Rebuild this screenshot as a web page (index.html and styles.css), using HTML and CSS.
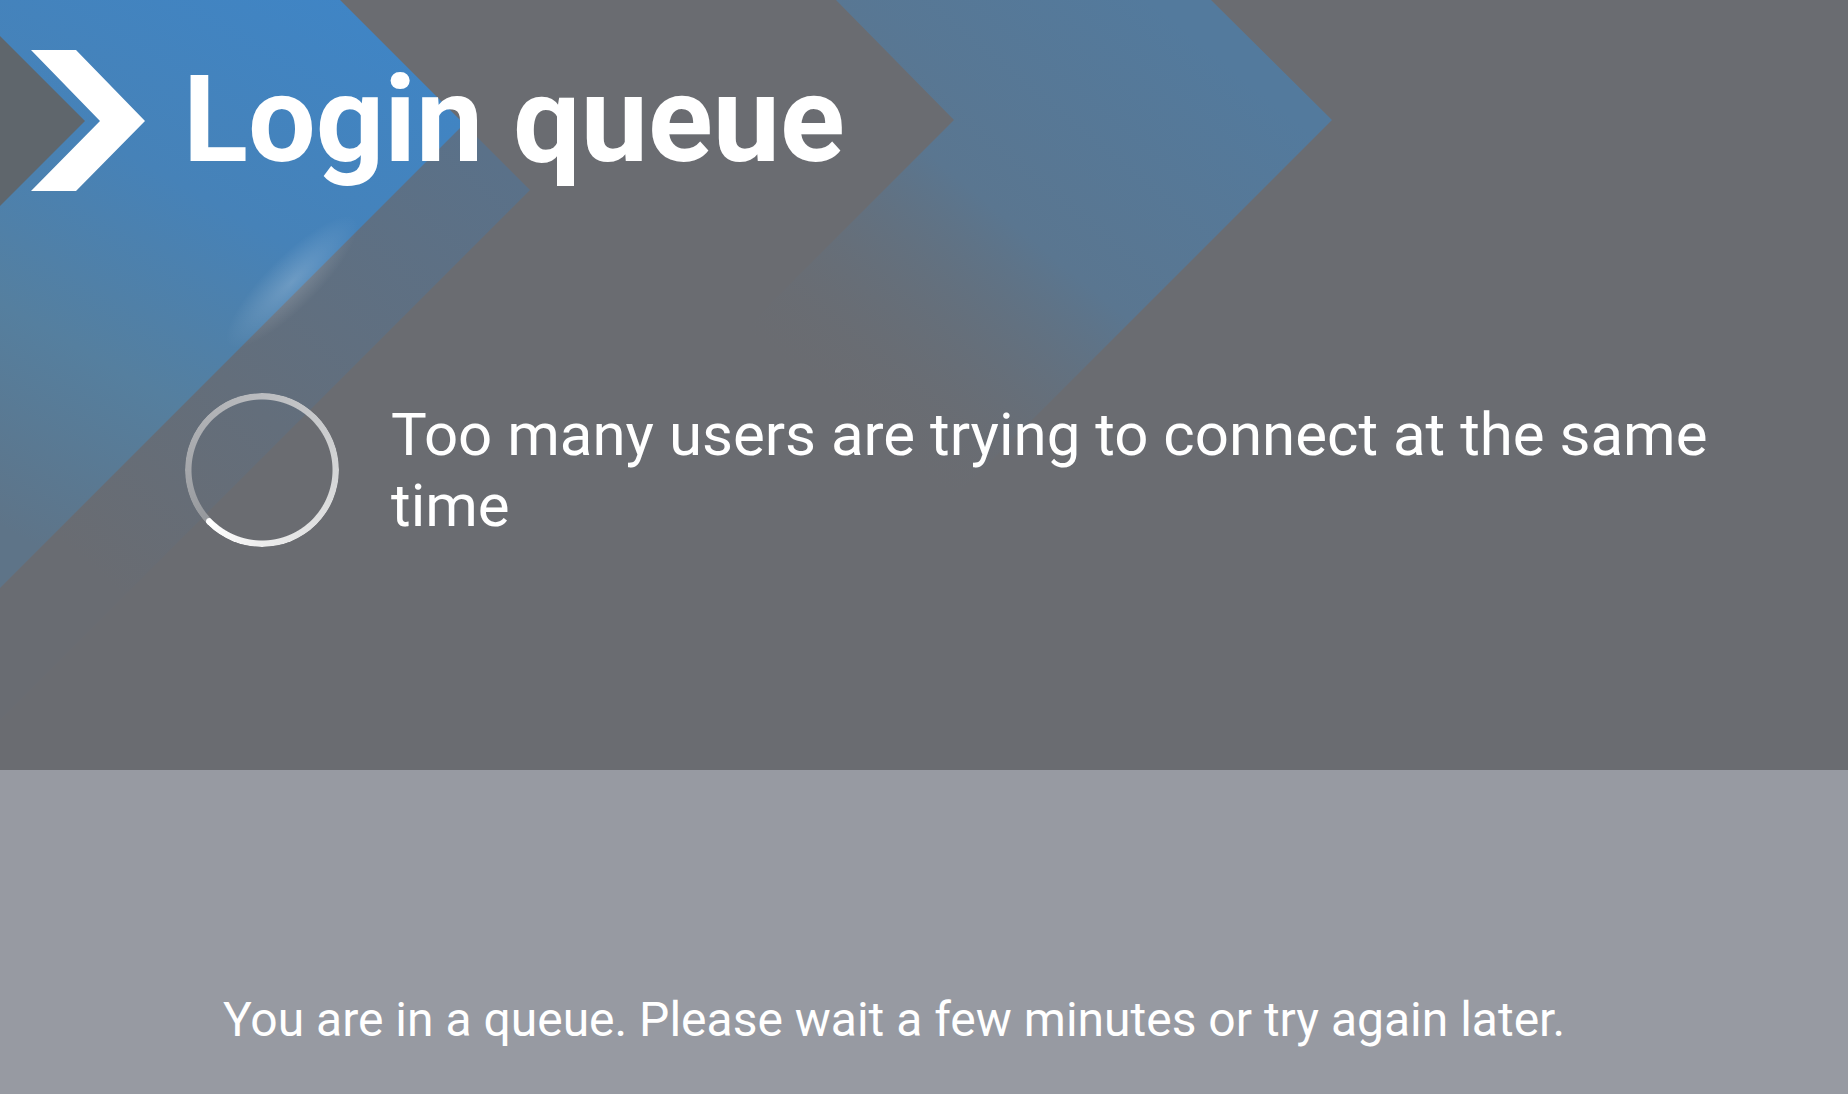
FILE: index.html
```html
<!DOCTYPE html>
<html lang="en">
  <head>
    <meta charset="UTF-8" />
    <meta name="viewport" content="width=device-width, initial-scale=1.0" />
    <title>Login queue</title>
    <link rel="stylesheet" href="styles.css">
  </head>
  <body>
    <section class="stage">
      <!-- decorative chevrons behind the header -->
      <svg class="backdrop" width="1848" height="770" viewBox="0 0 1848 770">
        <defs>
          <linearGradient id="blueFill" gradientUnits="userSpaceOnUse" x1="380" y1="0" x2="60" y2="560">
            <stop offset="0" stop-color="#3f85c6" />
            <stop offset="0.4" stop-color="#4682b8" />
            <stop offset="0.7" stop-color="#557f9f" />
            <stop offset="1" stop-color="#5e7488" />
          </linearGradient>
          <linearGradient id="shadeFill" gradientUnits="userSpaceOnUse" x1="530" y1="190" x2="150" y2="620">
            <stop offset="0" stop-color="#5a7189" />
            <stop offset="0.6" stop-color="#636e7b" />
            <stop offset="1" stop-color="#696c72" />
          </linearGradient>
          <linearGradient id="farFill" gradientUnits="userSpaceOnUse" x1="1150" y1="0" x2="820" y2="400">
            <stop offset="0" stop-color="#537a9d" />
            <stop offset="0.5" stop-color="#5a7690" />
            <stop offset="1" stop-color="#6a6c71" stop-opacity="0" />
          </linearGradient>
          <radialGradient id="glow">
            <stop offset="0" stop-color="#ffffff" stop-opacity="0.2" />
            <stop offset="1" stop-color="#ffffff" stop-opacity="0" />
          </radialGradient>
        </defs>
        <polygon fill="url(#shadeFill)" points="0,0 340,0 530,190 0,720" />
        <polygon fill="url(#blueFill)" points="0,0 340,0 464,124 0,588" />
        <polygon fill="#5f666c" points="0,36 85,121 0,206" />
        <polygon fill="url(#farFill)" points="836,0 1211,0 1332,120 682,770 304,770 954,120" />
        <ellipse cx="292" cy="282" rx="90" ry="26" fill="url(#glow)" transform="rotate(-45 292 282)" />
      </svg>

      <header class="head">
        <svg class="logo" viewBox="0 0 114 141">
          <polygon fill="#fff" points="0,0 45,0 114,71 45,141 0,141 69,71" />
        </svg>
        <h1 class="title">Login queue</h1>
      </header>

      <div class="status">
        <div class="spinner"></div>
        <p class="message">Too many users are trying to connect at the same time</p>
      </div>
    </section>

    <footer class="note">
      <p>You are in a queue. Please wait a few minutes or try again later.</p>
    </footer>
  </body>
</html>
```

FILE: styles.css
```css
body {
  margin: 0;
  font-family: Roboto, "Liberation Sans", sans-serif;
  color: #fff;
  background: #979aa2;
}
.stage {
  position: relative;
  height: 770px;
  background: #6a6c71;
  overflow: hidden;
}
.backdrop {
  position: absolute;
  top: 0;
  left: 0;
}
.head {
  position: relative;
  display: flex;
  align-items: center;
  padding: 50px 0 0 31px;
}
.logo {
  width: 114px;
  height: 141px;
  flex: none;
}
.title {
  margin: 0 0 0 38px;
  font-size: 120px;
  font-weight: 700;
  line-height: 141px;
}
.status {
  position: relative;
  display: flex;
  align-items: center;
  margin-top: 202px;
  padding: 0 60px 0 185px;
}
.spinner {
  position: relative;
  flex: none;
  width: 154px;
  height: 154px;
  border-radius: 50%;
  background: conic-gradient(from 225deg, #95989c, #a5a7ab 45deg, #babcbf 135deg, #d4d5d6 225deg, #ececec 315deg, #ffffff 360deg);
  -webkit-mask: radial-gradient(farthest-side, transparent calc(100% - 7px), #000 calc(100% - 6px));
  mask: radial-gradient(farthest-side, transparent calc(100% - 7px), #000 calc(100% - 6px));
}
.spinner::after {
  content: "";
  position: absolute;
  left: 21px;
  top: 125px;
  width: 7px;
  height: 7px;
  border-radius: 50%;
  background: #fff;
}
.message {
  flex: 1;
  margin: 0 0 0 52px;
  font-size: 60px;
  line-height: 71px;
}
.note {
  box-sizing: border-box;
  height: 324px;
  display: flex;
  align-items: flex-end;
  padding: 0 0 46px 223px;
}
.note p {
  margin: 0;
  font-size: 48px;
  line-height: 56px;
}
```
